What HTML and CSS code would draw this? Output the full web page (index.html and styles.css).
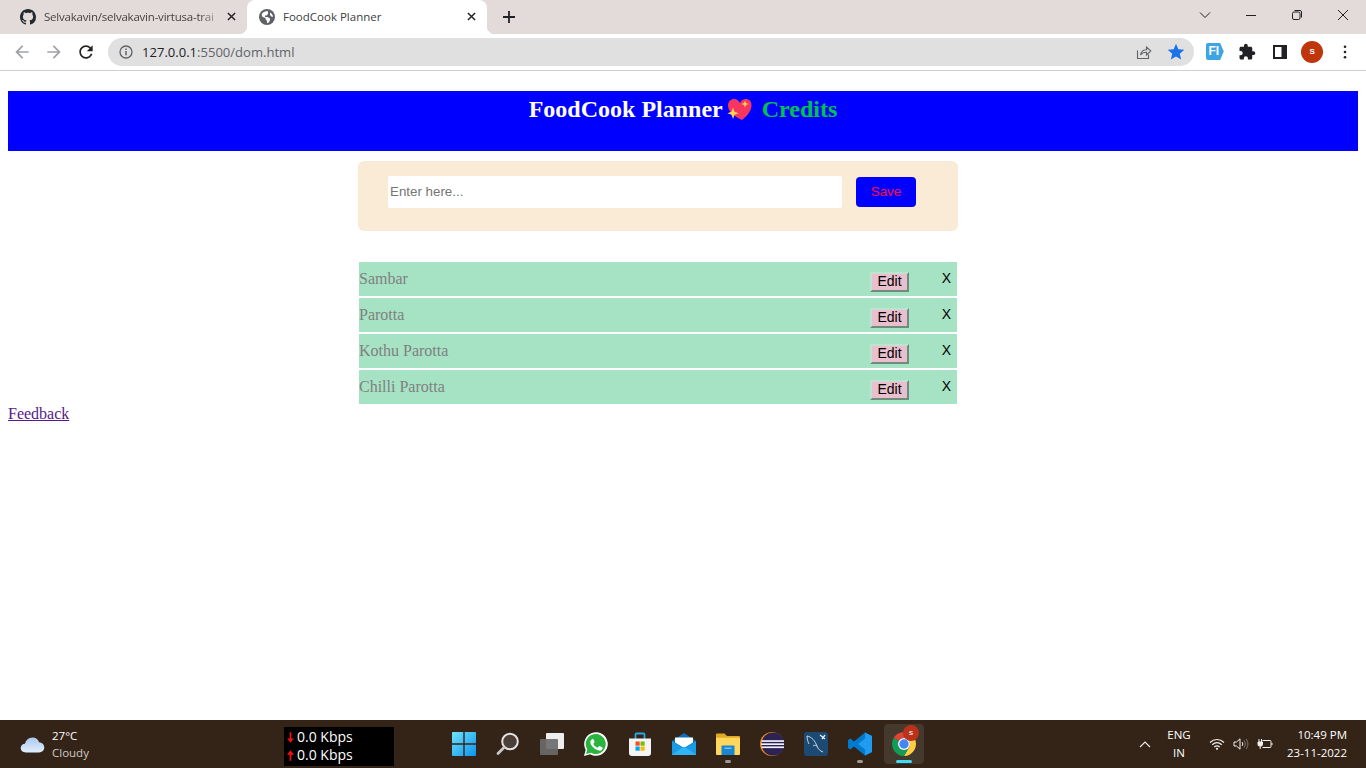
FILE: index.html
```html
<!DOCTYPE html>
<html lang="en">
<head>
<meta charset="utf-8">
<title>FoodCook Planner</title>
<link rel="stylesheet" href="styles.css">
</head>
<body>
<div class="screen">
  <div class="tabstrip">
    <div class="tab">
      <svg class="tab-icon" viewBox="0 0 16 16"><path fill="#24292f" d="M8 0C3.58 0 0 3.58 0 8c0 3.54 2.29 6.53 5.47 7.59.4.07.55-.17.55-.38 0-.19-.01-.82-.01-1.49-2.01.37-2.53-.49-2.69-.94-.09-.23-.48-.94-.82-1.13-.28-.15-.68-.52-.01-.53.63-.01 1.08.58 1.23.82.72 1.21 1.87.87 2.33.66.07-.52.28-.87.51-1.07-1.78-.2-3.64-.89-3.64-3.95 0-.87.31-1.59.82-2.15-.08-.2-.36-1.02.08-2.12 0 0 .67-.21 2.2.82.64-.18 1.32-.27 2-.27.68 0 1.36.09 2 .27 1.53-1.04 2.2-.82 2.2-.82.44 1.1.16 1.92.08 2.12.51.56.82 1.27.82 2.15 0 3.07-1.87 3.75-3.65 3.95.29.25.54.73.54 1.48 0 1.07-.01 1.93-.01 2.2 0 .21.15.46.55.38A8.013 8.013 0 0016 8c0-4.42-3.58-8-8-8z"/></svg>
      <span class="tab-title tab-title-faded">Selvakavin/selvakavin-virtusa-trai</span>
      <svg class="tab-close" viewBox="0 0 10 10"><path d="M1 1l8 8M9 1l-8 8" stroke="#202124" stroke-width="1.6" fill="none"/></svg>
    </div>
    <div class="tab tab-active">
      <svg class="tab-icon" viewBox="0 0 16 16"><circle cx="8" cy="8" r="8" fill="#5f6368"/><path fill="#fff" d="M7 2.200C5 2.500 3.400 3.700 2.600 5.400l1 2.600 3 1v1.400l1.400 1.400v2.100c.5 0 1 0 1.400-.2l1.600-2.500V9.500L8.500 8H6V6.500h1.500L9 5V2.300C8.400 2.100 7.700 2.100 7 2.200zM11 3.500V6l2 2 1-.4c-.2-1.700-1.400-3.300-3-4.100z"/></svg>
      <span class="tab-title">FoodCook Planner</span>
      <svg class="tab-close" viewBox="0 0 10 10"><path d="M1 1l8 8M9 1l-8 8" stroke="#202124" stroke-width="1.6" fill="none"/></svg>
    </div>
    <div class="newtab"><svg viewBox="0 0 12 12"><path d="M6 0v12M0 6h12" stroke="#202124" stroke-width="1.8" fill="none"/></svg></div>
    <div class="winctl">
      <div class="winbtn"><svg viewBox="0 0 12 12"><path d="M1 3.500l5 5 5-5" stroke="#202020" fill="none"/></svg></div>
      <div class="winbtn"><svg viewBox="0 0 12 12"><path d="M1 6.500h10" stroke="#202020" fill="none"/></svg></div>
      <div class="winbtn"><svg viewBox="0 0 12 12"><rect x="1.500" y="3" width="7.500" height="7.500" rx="1.500" stroke="#202020" fill="none"/><path d="M3.500 1.500h5.500a1.500 1.500 0 011.500 1.500v5.500" stroke="#202020" fill="none"/></svg></div>
      <div class="winbtn"><svg viewBox="0 0 12 12"><path d="M1 1l10 10M11 1l-10 10" stroke="#202020" fill="none"/></svg></div>
    </div>
  </div>

  <div class="toolbar">
    <div class="tool"><svg viewBox="0 0 24 24"><path fill="#a0a2a5" d="M20 11H7.830l5.590-5.590L12 4l-8 8 8 8 1.410-1.410L7.830 13H20v-2z"/></svg></div>
    <div class="tool"><svg viewBox="0 0 24 24"><path fill="#a0a2a5" d="M12 4l-1.410 1.410L16.170 11H4v2h12.170l-5.580 5.590L12 20l8-8z"/></svg></div>
    <div class="tool"><svg viewBox="0 0 24 24"><path fill="#202124" d="M17.650 6.350C16.200 4.900 14.210 4 12 4c-4.420 0-7.990 3.580-7.990 8s3.570 8 7.990 8c3.730 0 6.840-2.550 7.730-6h-2.080c-.82 2.330-3.040 4-5.650 4-3.310 0-6-2.690-6-6s2.690-6 6-6c1.660 0 3.140.69 4.220 1.780L13 11h7V4l-2.350 2.350z"/></svg></div>
    <div class="omnibox">
      <svg class="omni-info" viewBox="0 0 14 14"><circle cx="7" cy="7" r="6" stroke="#5f6368" stroke-width="1.300" fill="none"/><path d="M7 6v4.200M7 3.600v1.300" stroke="#5f6368" stroke-width="1.500" fill="none"/></svg>
      <span class="url"><span class="url-host">127.0.0.1</span>:5500/dom.html</span>
      <svg class="omni-share" viewBox="0 0 16 16"><path d="M1.500 6.500v8h11v-4" stroke="#5f6368" stroke-width="1.100" fill="none"/><path d="M4.500 11c.6-3.400 3-5.300 6-5.300V3l4.300 4-4.300 4V8.300c-2.500 0-4.500.8-6 2.700z" stroke="#5f6368" stroke-width="1.100" fill="none"/></svg>
      <svg class="omni-star" viewBox="0 0 24 24"><path fill="#1a73e8" d="M12 17.270L18.180 21l-1.640-7.030L22 9.240l-7.190-.61L12 2 9.190 8.630 2 9.240l5.460 4.730L5.820 21z"/></svg>
    </div>
    <div class="tools-right">
      <div class="tool-r"><span class="ext-fi">FI</span></div>
      <div class="tool-r"><svg viewBox="0 0 24 24"><path fill="#202124" d="M20.500 11H19V7c0-1.100-.9-2-2-2h-4V3.500C13 2.120 11.880 1 10.500 1S8 2.120 8 3.500V5H4c-1.100 0-1.990.9-1.990 2v3.800H3.500c1.490 0 2.700 1.210 2.700 2.700s-1.210 2.700-2.700 2.700H2V20c0 1.100.9 2 2 2h3.800v-1.500c0-1.490 1.210-2.700 2.700-2.700 1.490 0 2.700 1.210 2.700 2.700V22H17c1.100 0 2-.9 2-2v-4h1.500c1.380 0 2.500-1.120 2.500-2.500S21.880 11 20.500 11z"/></svg></div>
      <div class="tool-r"><svg viewBox="0 0 14 14" class="panel-icon"><path fill="#202124" fill-rule="evenodd" d="M0 0h14v14H0zM2 2v10h6.500V2z"/></svg></div>
      <div class="tool-r"><span class="avatar">S</span></div>
      <div class="tool-r"><svg viewBox="0 0 4 16" class="dots-icon"><circle cx="2" cy="2" r="1.500" fill="#202124"/><circle cx="2" cy="8" r="1.500" fill="#202124"/><circle cx="2" cy="14" r="1.500" fill="#202124"/></svg></div>
    </div>
  </div>

  <main class="page">
    <header class="banner">
      <span class="banner-title">FoodCook Planner</span>
      <svg class="banner-heart" viewBox="0 0 25 24"><path fill="#f5375f" d="M15 23C10 20.500 1 16 1 8.500 1 4.500 4 2 7 2c3 0 5 1.800 6 4 1-2.700 3.200-4 6-4 3 0 5.500 2.200 5.500 6C24.500 14.500 19 20 15 23z"/><path fill="#ffd34d" d="M6 10.500l1.500 4.200 4.200 1.500-4.200 1.500L6 22l-1.500-4.300-4.200-1.500 4.200-1.500zM18 3.500l.9 2.600 2.600.9-2.600.9-.9 2.600-.9-2.600-2.600-.9 2.600-.9z"/></svg>
      <a class="banner-link" href="#credits">Credits</a>
    </header>

    <form class="entry">
      <input class="entry-input" type="text" placeholder="Enter here...">
      <button class="entry-save" type="button">Save</button>
    </form>

    <ul class="dishes">
      <li class="dish"><span class="dish-name">Sambar</span><button class="dish-edit" type="button">Edit</button><span class="dish-x">X</span></li>
      <li class="dish"><span class="dish-name">Parotta</span><button class="dish-edit" type="button">Edit</button><span class="dish-x">X</span></li>
      <li class="dish"><span class="dish-name">Kothu Parotta</span><button class="dish-edit" type="button">Edit</button><span class="dish-x">X</span></li>
      <li class="dish"><span class="dish-name">Chilli Parotta</span><button class="dish-edit" type="button">Edit</button><span class="dish-x">X</span></li>
    </ul>

    <a class="feedback" href="#feedback">Feedback</a>
  </main>

  <footer class="taskbar">
    <div class="weather">
      <svg class="weather-icon" viewBox="0 0 26 18"><defs><linearGradient id="cl" x1="0" y1="0" x2="0" y2="1"><stop offset="0" stop-color="#a9c8f2"/><stop offset="1" stop-color="#e3eefb"/></linearGradient></defs><path fill="url(#cl)" d="M6 17.500C2.500 17.500.5 15.500.5 12.800c0-2.600 2-4.500 4.500-4.600C6 4.500 9 1.500 13 1.500c3.500 0 6 2 7 5 3 .2 5.500 2.500 5.500 5.500 0 3.300-2.500 5.500-5.500 5.500z"/></svg>
      <div class="weather-text"><div class="weather-temp">27°C</div><div class="weather-desc">Cloudy</div></div>
    </div>
    <div class="netspeed">
      <div class="net-row"><svg class="net-arrow" viewBox="0 0 8 12"><path fill="#f01010" d="M3 0h2v7h3l-4 5-4-5h3z"/></svg><span>0.0 Kbps</span></div>
      <div class="net-row"><svg class="net-arrow" viewBox="0 0 8 12"><path fill="#f01010" d="M3 12h2V5h3L4 0 0 5h3z"/></svg><span>0.0 Kbps</span></div>
    </div>
    <div class="apps">
      <div class="app"><svg viewBox="0 0 24 24" class="ico24"><defs><linearGradient id="win" x1="0" y1="0" x2="1" y2="1"><stop offset="0" stop-color="#6fe3fb"/><stop offset="1" stop-color="#0c93ee"/></linearGradient></defs><path fill="url(#win)" d="M0 1a1 1 0 011-1h10.300v11.300H0zM12.700 0H23a1 1 0 011 1v10.300H12.700zM0 12.700h11.300V24H1a1 1 0 01-1-1zM12.700 12.700H24V23a1 1 0 01-1 1H12.700z"/></svg></div>
      <div class="app"><svg viewBox="0 0 24 24" class="ico24"><circle cx="14" cy="9.500" r="7.800" fill="#4b3f37" stroke="#e4e4e4" stroke-width="2"/><path d="M8 15.500L2 21.500" stroke="#c8c8c8" stroke-width="2.800" stroke-linecap="round"/></svg></div>
      <div class="app"><svg viewBox="0 0 24 24" class="ico24"><rect x="6" y="1" width="18" height="16" rx="1" fill="#eeeeee"/><rect x="0" y="7" width="18" height="16" rx="1" fill="#6b6b6b" fill-opacity=".92"/></svg></div>
      <div class="app"><svg viewBox="0 0 24 24" class="ico24"><path fill="#fff" d="M0 24l1.700-6.200A11.800 11.800 0 1112 23.800c-2 0-4-.5-5.700-1.500z"/><path fill="#29b33f" d="M2 22l1.300-4.600A10 10 0 1112 22c-1.800 0-3.500-.5-5-1.300z"/><path fill="#fff" d="M8.600 6.700c.3 0 .6 0 .8.500l1.100 2.500c.1.300 0 .5-.1.700l-.9 1.100c-.2.200-.2.400 0 .7.900 1.500 2.100 2.600 3.700 3.400.3.100.5.100.7-.1l1-1.200c.2-.3.500-.3.800-.2l2.400 1.200c.3.200.5.300.5.500.1.700-.2 1.500-.7 2-.7.700-1.900 1-3 .8-3-.7-5.500-2.500-7.300-5-.9-1.300-1.400-2.600-1.200-3.900.1-.9.600-1.700 1.300-2.200.2-.2.700-.3.900-.3z"/></svg></div>
      <div class="app"><svg viewBox="0 0 24 24" class="ico24"><path d="M7.500 7V2.500a1 1 0 011-1h7a1 1 0 011 1V7" stroke="#2aa6e6" stroke-width="1.800" fill="none"/><path fill="#f4f4f4" d="M1 6.500h22V21a3 3 0 01-3 3H4a3 3 0 01-3-3z"/><rect x="7.500" y="9.500" width="4.200" height="4.200" fill="#f25022"/><rect x="12.500" y="9.500" width="4.200" height="4.200" fill="#7fba00"/><rect x="7.500" y="14.500" width="4.200" height="4.200" fill="#00a4ef"/><rect x="12.500" y="14.500" width="4.200" height="4.200" fill="#ffb900"/></svg></div>
      <div class="app"><svg viewBox="0 0 24 24" class="ico24"><path fill="#0f6cbd" d="M0 9L12 1l12 8v13a1 1 0 01-1 1H1a1 1 0 01-1-1z"/><path fill="#fff" d="M3 5.500h18v5l-9 5.500-9-5.500z"/><path fill="#1a9be6" d="M0 9l12 7.500L24 9v13a1 1 0 01-1 1H1a1 1 0 01-1-1z"/><path fill="#2fb4f5" d="M0 22.500L12 14.500l12 8a1 1 0 01-1 .5H1a1 1 0 01-1-.5z"/></svg></div>
      <div class="app app-open"><svg viewBox="0 0 24 24" class="ico24"><path fill="#e2a91f" d="M0 2.500a1 1 0 011-1h7.500l2.500 2.500h12a1 1 0 011 1V8H0z"/><path fill="#ffd75e" d="M0 5.800h24V22a1 1 0 01-1 1H1a1 1 0 01-1-1z"/><path fill="#1a86d0" d="M5.500 14.500a1 1 0 011-1h11a1 1 0 011 1V23h-13z"/><rect x="8.500" y="15.500" width="7" height="1.500" fill="#6fc2f2"/></svg></div>
      <div class="app"><svg viewBox="0 0 24 24" class="ico24"><circle cx="12" cy="12" r="12" fill="#f08a1c"/><circle cx="13" cy="12" r="11.500" fill="#2c2255"/><rect x="1.500" y="8.200" width="23" height="1.700" fill="#f1effa"/><rect x="1" y="11.300" width="23.500" height="1.700" fill="#f1effa"/><rect x="1.500" y="14.400" width="23" height="1.700" fill="#f1effa"/></svg></div>
      <div class="app"><svg viewBox="0 0 24 24" class="ico24"><rect width="24" height="24" rx="3" fill="#1c4a72"/><path d="M3 4c5 1 8 5 10 10 1 3 3 5 6 6M3 4c0 3 1 6 2 8M13 14c-2-1-3-1-4 0" stroke="#c9d8e6" stroke-width="1" fill="none"/><path d="M16 3l5 4M18 7l3-4" stroke="#e4edf4" stroke-width="1.300" fill="none"/></svg></div>
      <div class="app app-open"><svg viewBox="0 0 24 24" class="ico24"><path fill="#0065a9" d="M17 0.500L24 4v16l-7 3.500L7.500 12z"/><path fill="#007acc" d="M17 0.500V6.500L10 12l7 5.500v6L6 14.500 2.500 17.500 0 16V8l2.500-1.500L6 9.500z"/><path fill="#1f9cf0" d="M17 0.500L24 4v16l-7 3.500V17.500L10 12l7-5.500z"/></svg></div>
      <div class="app app-active">
        <svg viewBox="0 0 24 24" class="ico24"><path fill="#db4437" d="M1.610 6A12 12 0 0122.390 6H12a6 6 0 00-5.200 3z"/><path fill="#ffcd40" d="M22.390 6A12 12 0 0112 24l5.200-9A6 6 0 0012 6z"/><path fill="#0f9d58" d="M12 24A12 12 0 011.610 6L6.800 9a6 6 0 0010.400 6z"/><circle cx="12" cy="12" r="6" fill="#fff"/><circle cx="12" cy="12" r="4.700" fill="#4285f4"/></svg>
        <span class="app-badge">s</span>
      </div>
    </div>
    <div class="tray">
      <svg class="tray-chev" viewBox="0 0 12 7"><path d="M1 6l5-5 5 5" stroke="#eee" stroke-width="1.100" fill="none"/></svg>
      <div class="tray-lang"><div>ENG</div><div>IN</div></div>
      <svg class="tray-wifi" viewBox="0 0 16 12"><path d="M1 4.500c4-4 10-4 14 0M3.200 6.800c3-2.700 6.600-2.700 9.600 0M5.300 9c1.700-1.400 3.700-1.400 5.400 0" stroke="#f0f0f0" stroke-width="1.200" fill="none"/><circle cx="8" cy="10.800" r="1.100" fill="#f0f0f0"/></svg>
      <svg class="tray-vol" viewBox="0 0 16 14"><path d="M1 5h2.500L7 1.800v10.400L3.500 9H1z" stroke="#f0f0f0" fill="none"/><path d="M9 5c1 1 1 3 0 4" stroke="#f0f0f0" fill="none"/><path d="M11 3.500c1.800 2 1.800 5 0 7M13 2c2.500 3 2.500 7 0 10" stroke="#807a75" fill="none"/></svg>
      <svg class="tray-batt" viewBox="0 0 16 12"><path d="M5.500 2.500H13a1 1 0 011 1v5a1 1 0 01-1 1H5.500" stroke="#f0f0f0" fill="none"/><path d="M14.500 5h1v2h-1z" fill="#f0f0f0"/><path d="M1 4h4.500v2.500a1.500 1.500 0 01-1.500 1.500H2.500A1.500 1.500 0 011 6.500zM2 1v3M4.500 1v3M3.200 8v3" stroke="#f0f0f0" fill="#f0f0f0"/></svg>
      <div class="tray-clock"><div>10:49 PM</div><div>23-11-2022</div></div>
    </div>
  </footer>
</div>
</body>
</html>
```

FILE: styles.css
```css
* { box-sizing: border-box; }
html, body { margin: 0; padding: 0; height: 100%; overflow: hidden; background: #fff; }
.screen { display: flex; flex-direction: column; width: 1366px; height: 768px; }

/* tab strip */
.tabstrip { display: flex; align-items: stretch; flex: 0 0 34px; padding-left: 8px; background: #e3dbd9; font-family: "Open Sans", sans-serif; font-size: 11.5px; color: #45423f; }
.tab { position: relative; display: flex; align-items: center; width: 239px; padding: 0 8px 1px 12px; }
.tab-active { width: 240px; background: #fff; border-radius: 8px 8px 0 0; color: #3c4043; }
.tab-active::before, .tab-active::after { content: ""; position: absolute; bottom: 0; width: 8px; height: 8px; }
.tab-active::before { left: -8px; background: radial-gradient(circle at 0 0, transparent 8px, #fff 8.5px); }
.tab-active::after { right: -8px; background: radial-gradient(circle at 100% 0, transparent 8px, #fff 8.5px); }
.tab-icon { flex: none; width: 16px; height: 16px; margin-right: 8px; }
.tab-title { flex: 1; overflow: hidden; white-space: nowrap; }
.tab-title-faded { letter-spacing: -0.22px; -webkit-mask-image: linear-gradient(90deg, #000 90%, rgba(0,0,0,.35)); mask-image: linear-gradient(90deg, #000 90%, rgba(0,0,0,.35)); }
.tab-close { flex: none; width: 9px; height: 9px; margin: 0 3px 0 11px; }
.newtab { display: flex; align-items: center; justify-content: center; width: 28px; margin-left: 8px; }
.newtab svg { width: 12px; height: 12px; }
.winctl { display: flex; margin-left: auto; }
.winbtn { display: flex; align-items: center; justify-content: center; width: 46px; height: 30px; }
.winbtn svg { width: 12px; height: 12px; }

/* toolbar */
.toolbar { display: flex; align-items: center; flex: 0 0 37px; padding: 0 5px 1px 6px; background: #fff; border-bottom: 1px solid #cfcfcf; }
.tool { display: flex; align-items: center; justify-content: center; width: 32px; }
.tool svg { width: 20px; height: 20px; }
.omnibox { display: flex; align-items: center; flex: 1; height: 28px; margin-left: 6px; padding: 0 8px 0 11px; border-radius: 14px; background: #e0e0e0; }
.omni-info { width: 14px; height: 14px; margin-right: 9px; }
.url { flex: 1; font-family: "Open Sans", sans-serif; font-size: 13.05px; color: #5f6368; }
.url-host { color: #202124; }
.omni-share { width: 16px; height: 16px; margin-right: 14px; }
.omni-star { width: 20px; height: 20px; }
.tools-right { display: flex; align-items: center; margin-left: 5px; }
.tool-r { display: flex; align-items: center; justify-content: center; width: 32.5px; }
.tool-r svg { width: 18px; height: 18px; }
.tool-r .panel-icon { width: 14px; height: 14px; }
.tool-r .dots-icon { width: 4px; height: 14px; }
.ext-fi { display: block; width: 18px; height: 17px; padding-right: 2px; background: #3fa4e4; border-radius: 2px; color: #fff; font: bold 12px/17px "Liberation Sans", sans-serif; text-align: center; clip-path: polygon(0 0, 80% 0, 100% 50%, 80% 100%, 0 100%); }
.avatar { display: block; width: 22px; height: 22px; border-radius: 50%; background: #c0360c; color: #fff; font: bold 8px/22px "Liberation Sans", sans-serif; text-align: center; }

/* page */
.page { flex: 1; padding: 20px 8px 0; font-family: "Liberation Serif", serif; font-size: 16px; }
.banner { display: flex; justify-content: center; align-items: flex-start; height: 60px; padding: 5px 0 0; background: #00f; font-size: 24px; font-weight: bold; line-height: 27px; }
.banner-title { color: #fff; }
.banner-heart { flex: none; width: 25px; height: 24px; margin: 1px 10px 0 4px; }
.banner-link { color: #00c24f; text-decoration: none; }
.entry { display: flex; align-items: flex-start; width: 600px; height: 70px; margin: 10px 0 31px 350px; padding: 15px 30px; background: #faebd7; border-radius: 6px; }
.entry-input { width: 454px; height: 32px; padding: 0 2px 2px; border: 0; border-radius: 2px; background: #fff; font: 13.33px "Liberation Sans", sans-serif; }
.entry-input::placeholder { color: #757575; }
.entry-save { width: 60px; height: 30px; margin: 1px 0 0 14px; padding: 0 0 2px; border: 0; border-radius: 4px; background: #00f; color: #ff0a3c; font: 13.33px "Liberation Sans", sans-serif; }
.dishes { width: 598px; margin: 0 0 0 351px; padding: 0; list-style: none; }
.dish { display: flex; height: 34px; margin-bottom: 2px; background: #a6e3c4; }
.dish:last-child { margin-bottom: 1px; }
.dish-name { flex: 1; padding-top: 8px; color: #808080; line-height: 18px; }
.dish-edit { width: 39px; height: 20px; margin-top: 10px; padding: 0 0 2px; border: 2px solid; border-color: #bfe3d0 #6f8d7d #6f8d7d #bfe3d0; background: #eabfcd; color: #000; font: 14px/14px "Liberation Sans", sans-serif; }
.dish-x { width: 48px; padding: 8px 6px 0 0; text-align: right; font: 14px/16px "Liberation Sans", sans-serif; color: #000; }
.feedback { display: inline-block; color: #551a8b; line-height: 18px; }

/* taskbar */
.taskbar { position: relative; display: flex; align-items: stretch; flex: 0 0 48px; background: #342417; color: #fff; font-family: "Open Sans", sans-serif; }
.weather { display: flex; align-items: center; width: 284px; padding: 0 0 0 20px; }
.weather-icon { width: 25px; height: 17px; margin: 0 7px 0 0; }
.weather-text { font-size: 11.5px; line-height: 17px; }
.weather-desc { color: #cfcac6; }
.netspeed { align-self: flex-end; width: 110px; height: 39px; margin-bottom: 2px; padding: 1px 0 0 3px; background: #000; font-size: 14px; line-height: 18px; }
.net-row { display: flex; align-items: center; height: 18px; }
.net-arrow { width: 7px; height: 11px; margin-right: 3px; }
.apps { display: flex; margin-left: 48px; }
.app { position: relative; display: flex; align-items: center; justify-content: center; width: 44px; }
.ico24 { width: 24px; height: 24px; }
.app-open::after { content: ""; position: absolute; left: 19px; bottom: 5px; width: 6px; height: 3px; border-radius: 2px; background: #9a9a9a; }
.app-active::before { content: ""; position: absolute; left: 2px; top: 4px; width: 40px; height: 40px; border-radius: 4px; background: #45382d; }
.app-active::after { content: ""; position: absolute; left: 14px; bottom: 5px; width: 16px; height: 3px; border-radius: 2px; background: #3fdcf5; }
.app-active .ico24 { position: relative; }
.app-badge { position: absolute; left: 21px; top: 5px; width: 16px; height: 16px; border-radius: 50%; background: #b8331a; color: #f4d6cf; font: bold 8px/15px "Liberation Sans", sans-serif; text-align: center; }
.tray { display: flex; align-items: center; margin-left: auto; padding-right: 19px; font-size: 11.5px; line-height: 18px; }
.tray-chev { width: 12px; height: 7px; margin-right: 11px; }
.tray-lang { width: 34px; margin-right: 13px; text-align: center; }
.tray-wifi { width: 16px; height: 12px; margin-right: 8px; }
.tray-vol { width: 16px; height: 14px; margin-right: 8px; }
.tray-batt { width: 16px; height: 12px; margin-right: 14px; }
.tray-clock { text-align: right; }
```
